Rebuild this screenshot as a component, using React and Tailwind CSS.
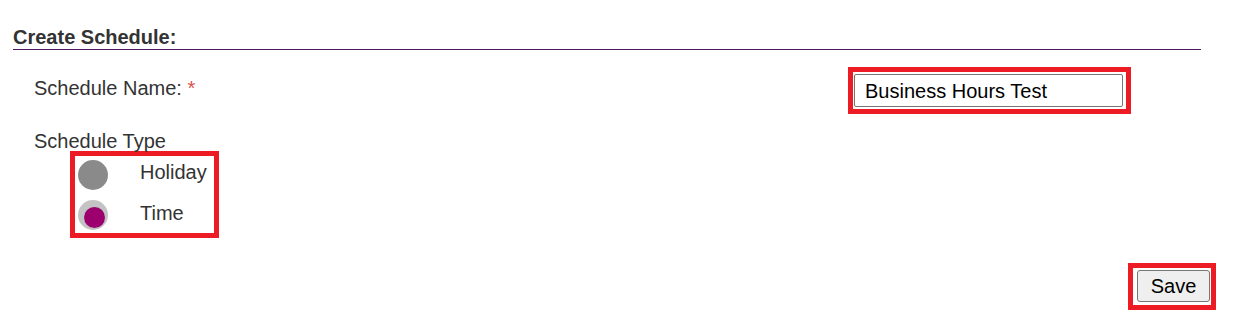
import React, { useState } from 'react';

export default function App() {
  const [name, setName] = useState('Business Hours Test');
  const [type, setType] = useState('time');

  return (
    <div className="w-[1257px] h-[331px] bg-white font-['Liberation_Sans',Arial,sans-serif] text-[#333333] overflow-hidden">
      {/* heading */}
      <div className="ml-[13px] mr-[56px] pt-[26px] border-b border-[#4b1a5c]">
        <h2 className="text-[20px] leading-[23px] font-bold">Create Schedule:</h2>
      </div>

      {/* schedule name */}
      <div className="flex items-start pl-[34px] mt-[17px]">
        <label className="w-[814px] mt-[10px] text-[20px] leading-[23px]">
          Schedule Name: <span className="text-[#d9534f]">*</span>
        </label>
        <div className="border-[5px] border-[#ed1c24] pl-[1px] pr-[3px] py-[2px]">
          <input
            value={name}
            onChange={(e) => setName(e.target.value)}
            className="w-[269px] h-[33px] border border-[#767676] rounded-[2px] pl-[10px] pt-[2px] text-[20px] text-black outline-none"
          />
        </div>
      </div>

      {/* schedule type */}
      <div className="pl-[34px] mt-[14px]">
        <div className="text-[20px] leading-[23px] pt-[2px] mb-[-2px]">Schedule Type</div>
        <div className="ml-[36px] w-[149px] border-[5px] border-[#ed1c24] pl-[3px] pt-[4px] pb-[3px] flex flex-col gap-[10px]">
          <button onClick={() => setType('holiday')} className="flex items-center gap-[32px] text-left">
            {type === 'holiday' ? (
              <span className="w-[30px] h-[30px] rounded-full bg-[#c3c3c3] pl-[6px] pt-[7px]">
                <span className="block w-[21px] h-[21px] rounded-full bg-[#9b006e]" />
              </span>
            ) : (
              <span className="w-[30px] h-[30px] rounded-full bg-[#8a8a8a]" />
            )}
            <span className="text-[20px] leading-[23px] mt-[-6px]">Holiday</span>
          </button>
          <button onClick={() => setType('time')} className="flex items-center gap-[32px] text-left">
            {type === 'time' ? (
              <span className="w-[30px] h-[30px] rounded-full bg-[#c3c3c3] pl-[6px] pt-[7px]">
                <span className="block w-[21px] h-[21px] rounded-full bg-[#9b006e]" />
              </span>
            ) : (
              <span className="w-[30px] h-[30px] rounded-full bg-[#8a8a8a]" />
            )}
            <span className="text-[20px] leading-[23px] mt-[-4px]">Time</span>
          </button>
        </div>
      </div>

      {/* save */}
      <div className="flex justify-end mr-[41px] mt-[25px]">
        <div className="border-[5px] border-[#ed1c24] pl-[4px] pr-[1px] pt-[2px] pb-[3px]">
          <button className="w-[73px] h-[32px] bg-[#efefef] border border-[#767676] rounded-[3px] text-[20px] text-black">
            Save
          </button>
        </div>
      </div>
    </div>
  );
}
